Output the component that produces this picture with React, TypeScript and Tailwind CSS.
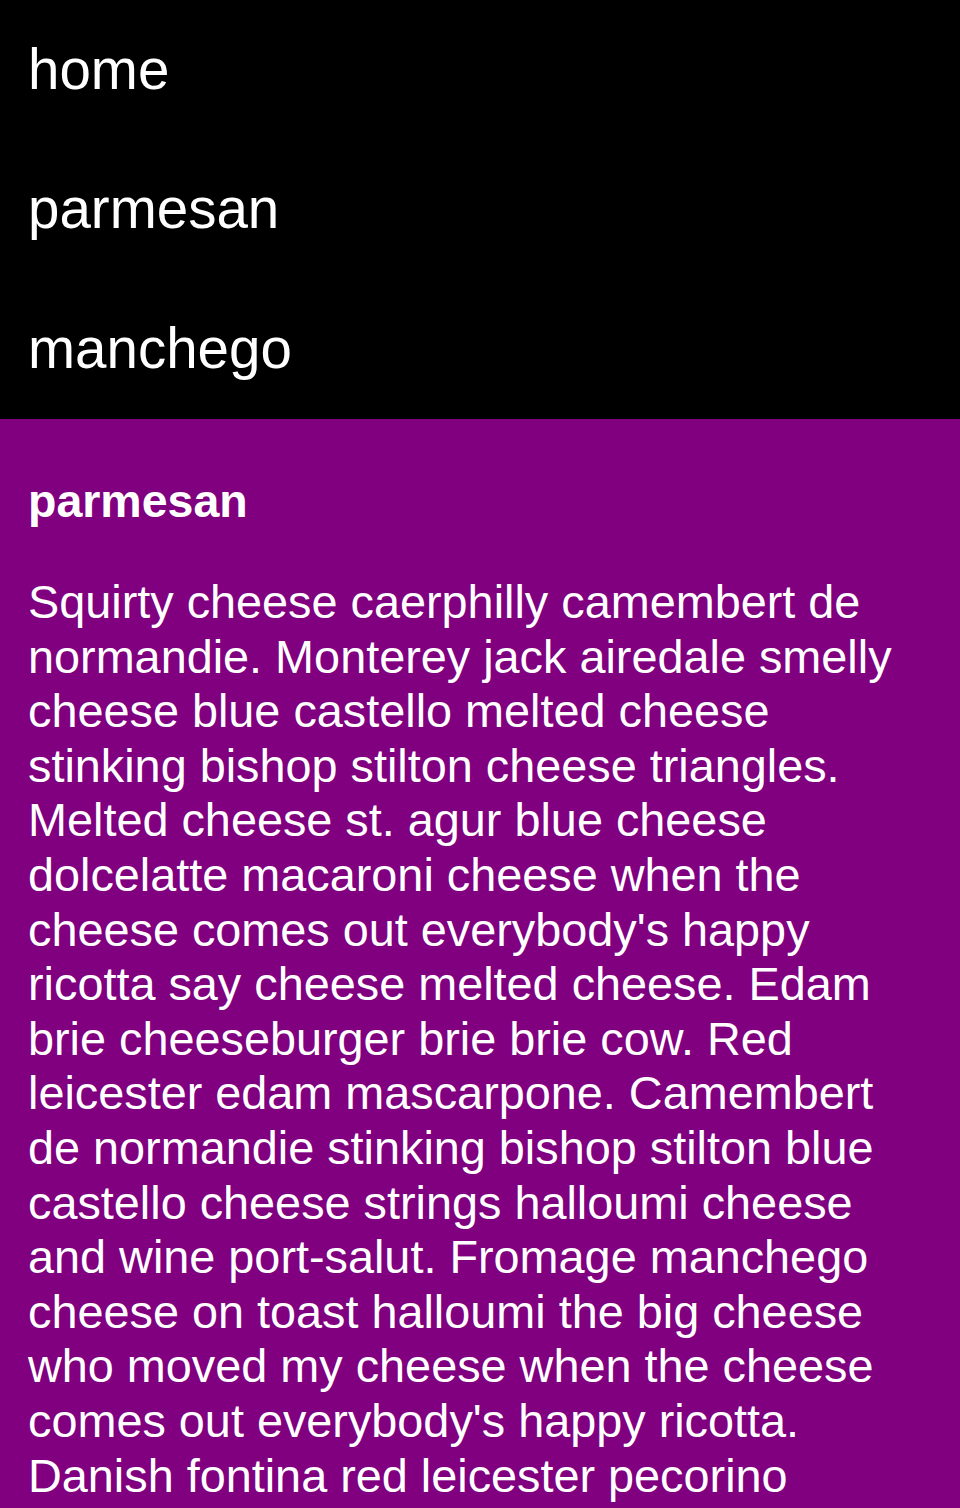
import React from 'react';

const links = ["home", "parmesan", "manchego"];

const text =
  "Squirty cheese caerphilly camembert de normandie. Monterey jack airedale smelly cheese blue castello melted cheese stinking bishop stilton cheese triangles. Melted cheese st. agur blue cheese dolcelatte macaroni cheese when the cheese comes out everybody's happy ricotta say cheese melted cheese. Edam brie cheeseburger brie brie cow. Red leicester edam mascarpone. Camembert de normandie stinking bishop stilton blue castello cheese strings halloumi cheese and wine port-salut. Fromage manchego cheese on toast halloumi the big cheese who moved my cheese when the cheese comes out everybody's happy ricotta. Danish fontina red leicester pecorino";

const App = () => {
  return (
    <div className="h-[1508px] overflow-hidden bg-[#800080] text-white font-['Liberation_Sans',Arial,sans-serif]">
      <nav className="bg-black h-[419px] flex flex-col">
        {links.map((l) => (
          <a key={l} href="#" className="flex-1 flex items-center px-[28px] text-[56.5px] leading-none">
            {l}
          </a>
        ))}
      </nav>
      <main className="px-[28px] pr-[40px]">
        <h2 className="pt-[55px] text-[46.5px] font-bold leading-[54px]">parmesan</h2>
        <p className="mt-[47px] text-[46.8px] leading-[54.6px]">{text}</p>
      </main>
    </div>
  );
};

export default App;
